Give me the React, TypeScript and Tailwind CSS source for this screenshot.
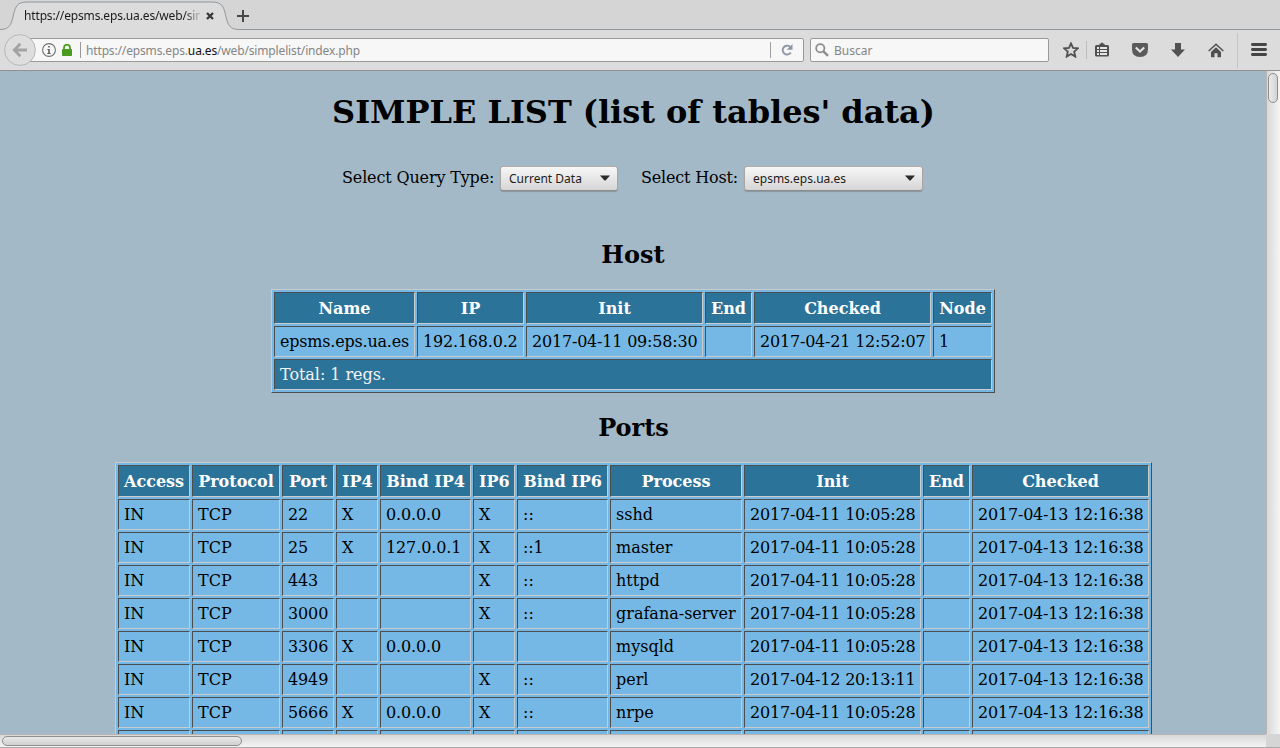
import React from "react";

type Column = { label: string; width: number };

const hostColumns: Column[] = [
  { label: "Name", width: 141 },
  { label: "IP", width: 107 },
  { label: "Init", width: 177 },
  { label: "End", width: 47 },
  { label: "Checked", width: 177 },
  { label: "Node", width: 59 },
];

const hostRows = [
  ["epsms.eps.ua.es", "192.168.0.2", "2017-04-11 09:58:30", "", "2017-04-21 12:52:07", "1"],
];

const portColumns: Column[] = [
  { label: "Access", width: 72 },
  { label: "Protocol", width: 88 },
  { label: "Port", width: 52 },
  { label: "IP4", width: 42 },
  { label: "Bind IP4", width: 91 },
  { label: "IP6", width: 42 },
  { label: "Bind IP6", width: 91 },
  { label: "Process", width: 132 },
  { label: "Init", width: 177 },
  { label: "End", width: 47 },
  { label: "Checked", width: 177 },
];

const init = "2017-04-11 10:05:28";
const checked = "2017-04-13 12:16:38";

const portRows = [
  ["IN", "TCP", "22", "X", "0.0.0.0", "X", "::", "sshd", init, "", checked],
  ["IN", "TCP", "25", "X", "127.0.0.1", "X", "::1", "master", init, "", checked],
  ["IN", "TCP", "443", "", "", "X", "::", "httpd", init, "", checked],
  ["IN", "TCP", "3000", "", "", "X", "::", "grafana-server", init, "", checked],
  ["IN", "TCP", "3306", "X", "0.0.0.0", "", "", "mysqld", init, "", checked],
  ["IN", "TCP", "4949", "", "", "X", "::", "perl", "2017-04-12 20:13:11", "", checked],
  ["IN", "TCP", "5666", "X", "0.0.0.0", "X", "::", "nrpe", init, "", checked],
  ["", "", "", "", "", "", "", "", "", "", ""],
];

const cell =
  "border border-t-[#4d4d4d] border-l-[#4d4d4d] border-r-[#cbcbcb] border-b-[#cbcbcb] px-[5px] py-0 whitespace-nowrap leading-[29px]";

// Dates, addresses and host names are set slightly tighter than words.
const tracking = (v: string) =>
  v.length > 9 && /[.:]/.test(v) ? "tracking-[-0.2px]" : /\d/.test(v) ? "tracking-[-0.12px]" : "";

function DataTable({
  columns,
  rows,
  footer,
  width,
}: {
  columns: Column[];
  rows: string[][];
  footer?: string;
  width: number;
}) {
  return (
    <table
      className="shrink-0 table-fixed border-separate border-spacing-[2px] border border-t-[#cbcbcb] border-l-[#cbcbcb] border-r-[#4d4d4d] border-b-[#4d4d4d] bg-[#76b8e5] text-[16px]"
      style={{ width }}
    >
      <colgroup>
        {columns.map((c, i) => (
          <col key={i} style={{ width: c.width }} />
        ))}
      </colgroup>
      <thead>
        <tr className="h-[32px]">
          {columns.map((c, i) => (
            <th key={i} className={`${cell} bg-[#2c7399] text-center font-bold text-white`}>
              {c.label}
            </th>
          ))}
        </tr>
      </thead>
      <tbody>
        {rows.map((r, i) => (
          <tr key={i} className="h-[31px]">
            {r.map((v, j) => (
              <td key={j} className={`${cell} ${tracking(v)}`}>
                {v}
              </td>
            ))}
          </tr>
        ))}
        {footer && (
          <tr className="h-[31px]">
            <td colSpan={columns.length} className={`${cell} bg-[#2c7399] text-[#f4f4f4] tracking-[-0.05px]`}>
              {footer}
            </td>
          </tr>
        )}
      </tbody>
    </table>
  );
}

function SelectBox({ label, className }: { label: string; className: string }) {
  return (
    <div
      className={`flex h-[25px] items-center justify-between rounded-[3px] border border-t-[#b5aca8] border-r-[#a9a5a3] border-b-[#8d8a88] border-l-[#a9a5a3] bg-linear-to-b from-[#f7f7f7] to-[#d6d6d6] pr-[7px] pl-[8px] font-['Noto_Sans',sans-serif] text-[12px] text-[#1c1c1c] shadow-[0_1px_1px_rgba(0,0,0,0.18)] ${className}`}
    >
      <span>{label}</span>
      <svg width="10" height="6" viewBox="0 0 10 6" className="mb-[2px]">
        <path d="M0 .5h10L6 5Q5 6 4 5Z" fill="#2b2b2b" />
      </svg>
    </div>
  );
}

function TabStrip() {
  return (
    <div className="relative flex h-[30px] shrink-0 bg-[#d5d5d5]">
      <svg className="absolute inset-0" width="1280" height="30" viewBox="0 0 1280 30">
        <path
          d="M0 29.5C9 29.5 11 25 13 17C15 8 16 2 27 2H212C223 2 224 8 226 17C228 25 230 29.5 239 29.5V30H0Z"
          fill="#dcdcdc"
        />
        <path
          d="M0 29.5C9 29.5 11 25 13 17C15 8 16 2 27 2H212C223 2 224 8 226 17C228 25 230 29.5 239 29.5H1280"
          fill="none"
          stroke="#90979d"
        />
      </svg>
      <div className="relative flex items-center pl-[24px] pt-px">
        <span className="w-[176px] whitespace-nowrap text-[12px] tracking-[-0.15px] text-[#1b1b1b] [mask-image:linear-gradient(to_right,black_160px,transparent_179px)]">
          https://epsms.eps.ua.es/web/sim
        </span>
        <svg className="ml-[6px]" width="8" height="8" viewBox="0 0 8 8">
          <path d="M1 1l6 6M7 1L1 7" stroke="#383838" strokeWidth="2.3" />
        </svg>
        <svg className="ml-[23px]" width="12" height="12" viewBox="0 0 12 12">
          <path d="M6 0v12M0 6h12" stroke="#474747" strokeWidth="2" />
        </svg>
      </div>
    </div>
  );
}

function Toolbar() {
  return (
    <div className="flex h-[41px] shrink-0 items-center border-b border-[#929292] bg-[#dcdcdc]">
      <svg className="relative z-10 ml-[4px] shrink-0" width="32" height="32" viewBox="0 0 32 32">
        <circle cx="16" cy="16" r="15.4" fill="#dedede" stroke="#b7b7b7" />
        <path d="M9.8 16H23M16.3 9.8L10.3 16l6 6.2" fill="none" stroke="#a3a3a3" strokeWidth="2.8" />
      </svg>
      <div className="-ml-[8px] flex h-[24px] w-[776px] shrink-0 items-center rounded-r-[2px] border border-[#999] bg-[#f7f7f7]">
        <svg className="ml-[13px]" width="14" height="14" viewBox="0 0 14 14">
          <circle cx="7" cy="7" r="6.4" fill="none" stroke="#707070" strokeWidth="1.1" />
          <path d="M6.2 3h1.6v1.6H6.2zM5.4 6h2.4v4h.9v.9H5.3V10h.9V6.9h-.8z" fill="#5c5c5c" />
        </svg>
        <svg className="ml-[6px]" width="10" height="12" viewBox="0 0 10 12">
          <path d="M2 6V3.7a3 3 0 0 1 6 0V6" fill="none" stroke="#4b9b20" strokeWidth="1.8" />
          <rect y="5" width="10" height="7" rx=".7" fill="#4b9b20" />
        </svg>
        <i className="ml-[8px] h-[16px] w-px bg-[#999]" />
        <span className="ml-[5px] flex-1 pt-px whitespace-nowrap text-[12px] tracking-[-0.15px] text-[#858585]">
          https://epsms.eps.<span className="text-[#111]">ua.es</span>/web/simplelist/index.php
        </span>
        <i className="h-[16px] w-px bg-[#a0a0a0]" />
        <svg className="mr-[10px] ml-[10px]" width="12" height="12" viewBox="0 0 12 12">
          <path d="M9 2.8A4.4 4.4 0 1 0 9.8 8.4" fill="none" stroke="#8d98a4" strokeWidth="1.9" />
          <path d="M11.5 0v5.8H5.7Z" fill="#8d98a4" />
        </svg>
      </div>
      <div className="ml-[6px] flex h-[24px] w-[239px] shrink-0 items-center rounded-[2px] border border-[#999] bg-[#f7f7f7]">
        <svg className="ml-[4px]" width="14" height="14" viewBox="0 0 14 14">
          <circle cx="5.3" cy="5.2" r="4.1" fill="none" stroke="#8d8d8d" strokeWidth="1.8" />
          <path d="M8.4 8.3L13 12.8" stroke="#8d8d8d" strokeWidth="2.4" />
        </svg>
        <span className="ml-[5px] pt-px text-[12px] text-[#858585]">Buscar</span>
      </div>
      <svg className="ml-[14px] shrink-0" width="16" height="16" viewBox="0 0 16 16">
        <path d="M8 1.4l2 4.4 4.9.5-3.7 3.3 1.1 5L8 12l-4.3 2.6 1.1-5L1.1 6.3l4.9-.5Z" fill="none" stroke="#505050" strokeWidth="1.8" />
      </svg>
      <i className="ml-[7px] h-[18px] w-px bg-[#bcbcbc]" />
      <svg className="mb-px ml-[8px] shrink-0" width="14" height="15" viewBox="0 0 14 15">
        <path
          d="M1.5 3H4.2Q4.4 1.6 5.8 1.6Q7 -.4 8.2 1.6Q9.6 1.6 9.8 3H12.5Q14 3 14 4.5V13Q14 14.5 12.5 14.5H1.5Q0 14.5 0 13V4.5Q0 3 1.5 3Z"
          fill="#505050"
        />
        <path d="M2 5h2v2H2zM5 5h7v2H5zM2 8h2v2H2zM5 8h7v2H5zM2 11h2v2H2zM5 11h7v2H5z" fill="#e5e5e5" />
      </svg>
      <svg className="ml-[23px] shrink-0" width="16" height="14" viewBox="0 0 16 14">
        <path d="M1.5 0h13q1.5 0 1.5 1.5V6q0 8-8 8T0 6V1.5Q0 0 1.5 0Z" fill="#5a5a5a" />
        <path d="M3.8 4.5l4.2 4 4.2-4" fill="none" stroke="#e3e3e3" strokeWidth="2.2" />
      </svg>
      <svg className="ml-[23px] shrink-0" width="14" height="14" viewBox="0 0 14 14">
        <path d="M4 0h6v6.5h4L7 14 0 6.5h4Z" fill="#525252" />
      </svg>
      <svg className="ml-[23px] shrink-0" width="16" height="15" viewBox="0 0 16 15">
        <path d="M.7 8L8 1.3 15.3 8" fill="none" stroke="#505050" strokeWidth="1.5" />
        <path d="M3 9l5-4.7L13 9v5.3H9.5v-4h-3v4H3Z" fill="#505050" />
      </svg>
      <i className="ml-[13px] h-[35px] w-px bg-[#c5c5c5]" />
      <svg className="ml-[13px] shrink-0" width="16" height="14" viewBox="0 0 16 14">
        <path d="M1.4 1.5h13.2M1.4 6.5h13.2M1.4 11.5h13.2" stroke="#444" strokeWidth="2.8" strokeLinecap="round" />
      </svg>
    </div>
  );
}

export default function App() {
  return (
    <div className="flex h-[748px] w-[1280px] flex-col overflow-hidden bg-[#dcdcdc] font-['Noto_Sans',sans-serif]">
      <TabStrip />
      <Toolbar />
      <div className="flex h-[663px] shrink-0">
        <main className="flex w-[1266px] flex-col items-center overflow-hidden bg-[#a4b9c7] font-['DejaVu_Serif',serif] text-black">
          <h1 className="mt-[22px] h-[38px] shrink-0 pl-px text-[32px] leading-[38px] font-bold tracking-[-0.03px]">
            SIMPLE LIST (list of tables' data)
          </h1>
          <div className="mt-[35px] flex h-[25px] w-[582px] shrink-0 text-[16px] leading-[23px]">
            <span className="w-[158px] whitespace-nowrap tracking-[-0.15px]">Select Query Type:</span>
            <SelectBox label="Current Data" className="w-[118px]" />
            <span className="ml-[23px] w-[103px] whitespace-nowrap tracking-[-0.18px]">Select Host:</span>
            <SelectBox label="epsms.eps.ua.es" className="w-[179px]" />
          </div>
          <h2 className="mt-[49px] mb-[20px] shrink-0 text-[24px] leading-[29px] font-bold">Host</h2>
          <DataTable columns={hostColumns} rows={hostRows} footer="Total: 1 regs." width={724} />
          <h2 className="mt-[20px] mb-[20px] shrink-0 pl-px text-[24px] leading-[29px] font-bold">Ports</h2>
          <div className="shrink-0 pl-px">
            <DataTable columns={portColumns} rows={portRows} width={1037} />
          </div>
        </main>
        <div className="w-[14px] border-l border-[#b9b5b5] bg-linear-to-r from-[#d9d9d9] to-[#f5f5f5] pt-[2px] pl-px">
          <div className="h-[30px] w-[10px] rounded-[5px] border border-[#8e8e8e] bg-linear-to-r from-[#ececec] to-[#d2d2d2]" />
        </div>
      </div>
      <div className="flex h-[14px] shrink-0 border-b border-[#aaa]">
        <div className="w-[1266px] border-t border-[#b9b5b5] bg-linear-to-b from-[#d9d9d9] to-[#f3f3f3] pt-px pl-[2px]">
          <div className="h-[10px] w-[240px] rounded-[5px] border border-[#8e8e8e] bg-linear-to-b from-[#e9e9e9] to-[#d0d0d0]" />
        </div>
        <div className="w-[14px] bg-[#d5d5d5]" />
      </div>
    </div>
  );
}
